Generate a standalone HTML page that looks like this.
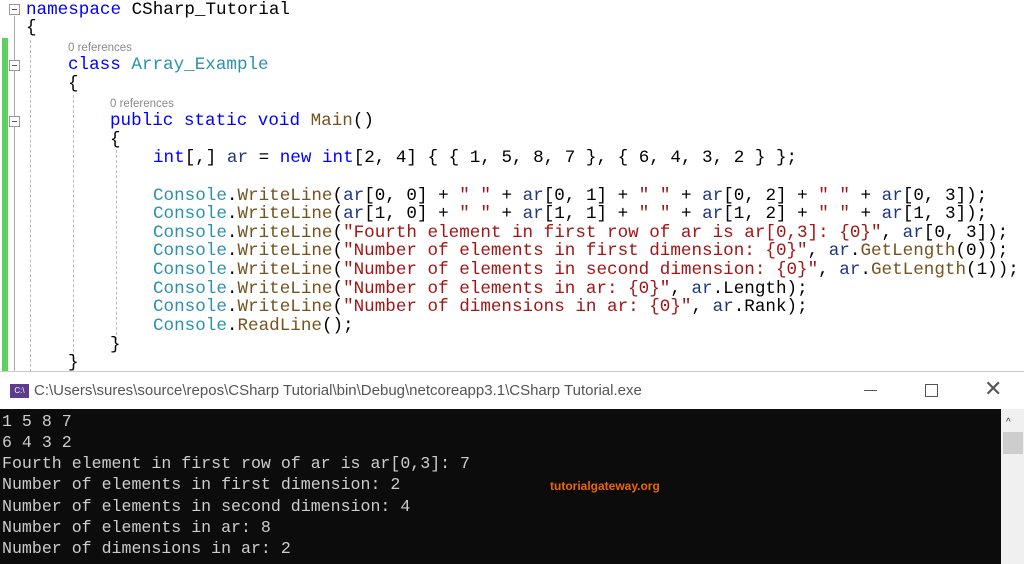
<!DOCTYPE html>
<html><head><meta charset="utf-8"><style>
body{margin:0;width:1024px;height:564px;overflow:hidden;background:#fff;position:relative;font-family:"Liberation Mono",monospace}
.l{position:absolute;white-space:pre;font-size:17.6px;line-height:18.6px;color:#000}
.r{position:absolute;font-family:"Liberation Sans",sans-serif;font-size:11.5px;color:#8a8a8a;line-height:14px}
.k{color:#0000ff}.t{color:#2b91af}.s{color:#a31515}.m{color:#74531f}.v{color:#1f377f}
.box{position:absolute;left:9px;width:9px;height:9px;border:1px solid #999;background:#fff}
.box:after{content:"";position:absolute;left:2px;top:4px;width:5px;height:1px;background:#555}
.g{position:absolute;border-left:1px dashed #bbb;width:0}
.c{position:absolute;left:2px;white-space:pre;color:#ccc;font-size:16.6px;line-height:21px}
</style></head><body>
<div style="position:absolute;left:2px;top:38px;width:6px;height:333px;background:#5ed05e"></div>
<div style="position:absolute;left:14px;top:16px;width:1px;height:355px;background:#aaa"></div>
<div class="box" style="top:4px"></div>
<div class="box" style="top:60px"></div>
<div class="box" style="top:116px"></div>
<div class="g" style="left:30px;top:40px;height:332px"></div>
<div class="g" style="left:73px;top:95px;height:277px"></div>
<div class="g" style="left:116px;top:150px;height:190px"></div>

<div class="l" style="left:26px;top:1px"><span class="k">namespace</span> CSharp_Tutorial</div>
<div class="l" style="left:26px;top:19px">{</div>
<div class="r" style="left:68px;top:41px">0 references</div>
<div class="l" style="left:68px;top:56px"><span class="k">class</span> <span class="t">Array_Example</span></div>
<div class="l" style="left:68px;top:75px">{</div>
<div class="r" style="left:110px;top:97px">0 references</div>
<div class="l" style="left:110px;top:112px"><span class="k">public static void</span> <span class="m">Main</span>()</div>
<div class="l" style="left:110px;top:131px">{</div>
<div class="l" style="left:153px;top:149px"><span class="k">int</span>[,] <span class="v">ar</span> = <span class="k">new int</span>[2, 4] { { 1, 5, 8, 7 }, { 6, 4, 3, 2 } };</div>
<div class="l" style="left:153px;top:187px"><span class="t">Console</span>.<span class="m">WriteLine</span>(<span class="v">ar</span>[0, 0] + <span class="s">" "</span> + <span class="v">ar</span>[0, 1] + <span class="s">" "</span> + <span class="v">ar</span>[0, 2] + <span class="s">" "</span> + <span class="v">ar</span>[0, 3]);</div>
<div class="l" style="left:153px;top:205px"><span class="t">Console</span>.<span class="m">WriteLine</span>(<span class="v">ar</span>[1, 0] + <span class="s">" "</span> + <span class="v">ar</span>[1, 1] + <span class="s">" "</span> + <span class="v">ar</span>[1, 2] + <span class="s">" "</span> + <span class="v">ar</span>[1, 3]);</div>
<div class="l" style="left:153px;top:224px"><span class="t">Console</span>.<span class="m">WriteLine</span>(<span class="s">"Fourth element in first row of ar is ar[0,3]: {0}"</span>, <span class="v">ar</span>[0, 3]);</div>
<div class="l" style="left:153px;top:242px"><span class="t">Console</span>.<span class="m">WriteLine</span>(<span class="s">"Number of elements in first dimension: {0}"</span>, <span class="v">ar</span>.<span class="m">GetLength</span>(0));</div>
<div class="l" style="left:153px;top:261px"><span class="t">Console</span>.<span class="m">WriteLine</span>(<span class="s">"Number of elements in second dimension: {0}"</span>, <span class="v">ar</span>.<span class="m">GetLength</span>(1));</div>
<div class="l" style="left:153px;top:280px"><span class="t">Console</span>.<span class="m">WriteLine</span>(<span class="s">"Number of elements in ar: {0}"</span>, <span class="v">ar</span>.Length);</div>
<div class="l" style="left:153px;top:298px"><span class="t">Console</span>.<span class="m">WriteLine</span>(<span class="s">"Number of dimensions in ar: {0}"</span>, <span class="v">ar</span>.Rank);</div>
<div class="l" style="left:153px;top:317px"><span class="t">Console</span>.<span class="m">ReadLine</span>();</div>
<div class="l" style="left:110px;top:336px">}</div>
<div class="l" style="left:68px;top:354px">}</div>

<div style="position:absolute;left:0;top:371px;width:1024px;height:39px;background:#fff;border-top:1px solid #ccc"></div>
<div style="position:absolute;left:10px;top:384px;width:19px;height:14px;background:#5c3c8c;color:#fff;font:8px 'Liberation Sans',sans-serif;line-height:14px;text-align:center">C:\</div>
<div style="position:absolute;left:34px;top:382px;font:15px 'Liberation Sans',sans-serif;color:#555;white-space:pre">C:\Users\sures\source\repos\CSharp Tutorial\bin\Debug\netcoreapp3.1\CSharp Tutorial.exe</div>
<div style="position:absolute;left:864px;top:390px;width:13px;height:1px;background:#555"></div>
<div style="position:absolute;left:925px;top:384px;width:11px;height:11px;border:1px solid #555"></div>
<div style="position:absolute;left:984px;top:376px;font:22px 'Liberation Sans',sans-serif;color:#555">✕</div>
<div style="position:absolute;left:0;top:409px;width:1001px;height:155px;background:#0c0c0c"></div>
<div style="position:absolute;left:1001px;top:409px;width:23px;height:155px;background:#f0f0f0"></div>
<div style="position:absolute;left:1006px;top:417px;font:10px 'Liberation Sans',sans-serif;color:#333">^</div>
<div style="position:absolute;left:1003px;top:432px;width:20px;height:22px;background:#cdcdcd"></div>
<div class="c" style="top:411px">1 5 8 7</div>
<div class="c" style="top:432px">6 4 3 2</div>
<div class="c" style="top:453px">Fourth element in first row of ar is ar[0,3]: 7</div>
<div class="c" style="top:474px">Number of elements in first dimension: 2</div>
<div class="c" style="top:496px">Number of elements in second dimension: 4</div>
<div class="c" style="top:517px">Number of elements in ar: 8</div>
<div class="c" style="top:538px">Number of dimensions in ar: 2</div>
<div style="position:absolute;left:550px;top:479px;font:bold 12px 'Liberation Sans',sans-serif;color:#e8650c">tutorialgateway.org</div>
</body></html>
